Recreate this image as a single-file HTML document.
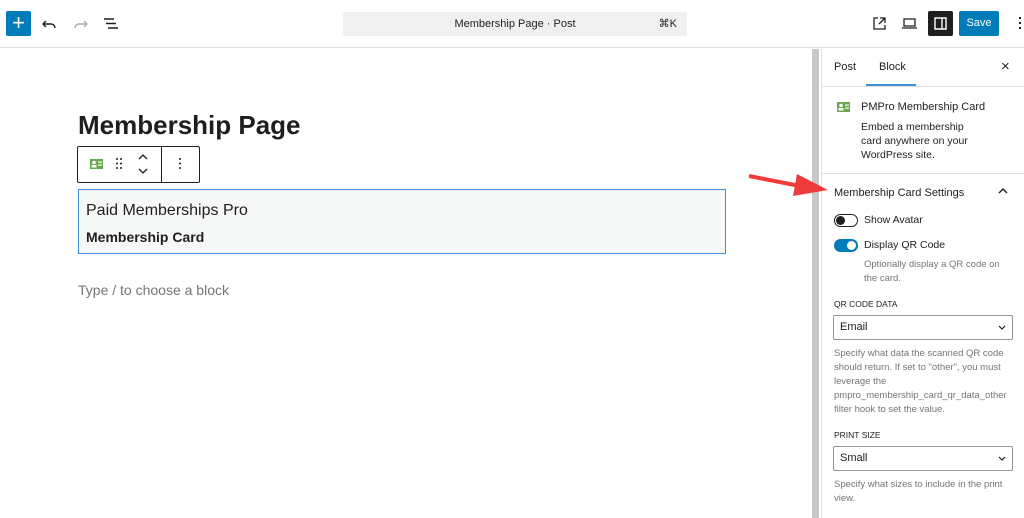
<!DOCTYPE html>
<html><head><meta charset="utf-8">
<style>
*{box-sizing:border-box;margin:0;padding:0}
body{width:1024px;height:518px;overflow:hidden;background:#fff;font-family:"Liberation Sans",sans-serif;color:#1e1e1e;position:relative}
.abs{position:absolute}
.top{left:0;top:0;width:1024px;height:48px;border-bottom:1px solid #e0e0e0;background:#fff}
.plus{left:6px;top:11px;width:25px;height:25px;background:#007cba;border-radius:2px;color:#fff;font-size:22px;line-height:24px;text-align:center}
.cmd{left:343px;top:12px;width:344px;height:24px;background:#f0f0f0;border-radius:2px;font-size:11px;line-height:24px;text-align:center;color:#1e1e1e}
.save{left:959px;top:11px;width:40px;height:25px;background:#007cba;color:#fff;border-radius:2px;font-size:11px;line-height:25px;text-align:center}
.sb{left:812px;top:49px;width:7px;height:469px;background:#c8c8c8}
.side{left:821px;top:49px;width:203px;height:469px;border-left:1px solid #e0e0e0;background:#fff;font-size:11px}
.t{font-size:11px}
.help{color:#757575;font-size:9.5px;line-height:14px}
.sel{width:180px;height:25px;border:1px solid #949494;border-radius:2px;font-size:11px;line-height:23px;padding-left:6px}
.lab{font-size:8.5px;font-weight:500;color:#1e1e1e}
</style></head><body>
<div class="abs top"></div>
<div class="abs plus">+</div>
<svg class="abs" style="left:41px;top:15px" width="18" height="18" viewBox="0 0 18 18"><path d="M5 6 L2 9 L5 12 M2 9 H10 a4 4 0 0 1 4 4" fill="none" stroke="#1e1e1e" stroke-width="1.4"/></svg>
<svg class="abs" style="left:71px;top:15px" width="18" height="18" viewBox="0 0 18 18"><path d="M13 6 L16 9 L13 12 M16 9 H8 a4 4 0 0 0 -4 4" fill="none" stroke="#aaa" stroke-width="1.4"/></svg>
<svg class="abs" style="left:102px;top:16px" width="18" height="16" viewBox="0 0 18 16"><path d="M2 3H12M4 7.5H14M6 12H16" stroke="#1e1e1e" stroke-width="1.4"/></svg>
<div class="abs cmd">Membership Page · Post<span style="position:absolute;right:10px">⌘K</span></div>
<svg class="abs" style="left:872px;top:16px" width="15" height="15" viewBox="0 0 15 15"><path d="M6 2H2V13H13V9M8 2H13V7M13 2L7 8" fill="none" stroke="#1e1e1e" stroke-width="1.3"/></svg>
<svg class="abs" style="left:901px;top:17px" width="17" height="13" viewBox="0 0 17 13"><path d="M3 2H14V9H3Z M1 11H16" fill="none" stroke="#1e1e1e" stroke-width="1.3"/></svg>
<div class="abs" style="left:928px;top:11px;width:25px;height:25px;background:#1e1e1e;border-radius:2px"></div>
<svg class="abs" style="left:933px;top:16px" width="15" height="15" viewBox="0 0 15 15"><path d="M2 2H13V13H2Z M9 2V13" fill="none" stroke="#fff" stroke-width="1.4"/></svg>
<div class="abs save">Save</div>
<div class="abs" style="left:1019px;top:17px;width:2px;height:2px;background:#1e1e1e;box-shadow:0 5px 0 #1e1e1e,0 10px 0 #1e1e1e"></div>

<div class="abs" style="left:78px;top:110px;font-size:26px;font-weight:bold">Membership Page</div>
<div class="abs" style="left:77px;top:146px;width:123px;height:37px;border:1px solid #1e1e1e;border-radius:2px"></div>
<div class="abs" style="left:161px;top:147px;width:1px;height:35px;background:#1e1e1e"></div>
<svg class="abs" style="left:90px;top:159px" width="13" height="10" viewBox="0 0 13 10"><rect width="13" height="10" fill="#6aa84f"/><circle cx="4" cy="3.5" r="1.8" fill="#fff"/><rect x="1.5" y="6" width="5" height="2.5" fill="#fff"/><rect x="8" y="2.5" width="4" height="1.2" fill="#fff"/><rect x="8" y="5.5" width="4" height="1.2" fill="#fff"/></svg>
<svg class="abs" style="left:115px;top:157px" width="8" height="13" viewBox="0 0 8 13"><g fill="#1e1e1e"><circle cx="2" cy="2" r="1"/><circle cx="6" cy="2" r="1"/><circle cx="2" cy="6.5" r="1"/><circle cx="6" cy="6.5" r="1"/><circle cx="2" cy="11" r="1"/><circle cx="6" cy="11" r="1"/></g></svg>
<svg class="abs" style="left:137px;top:153px" width="12" height="22" viewBox="0 0 12 22"><path d="M2 6L6 2L10 6M2 16L6 20L10 16" fill="none" stroke="#1e1e1e" stroke-width="1.3"/></svg>
<svg class="abs" style="left:178px;top:157px" width="4" height="13" viewBox="0 0 4 13"><g fill="#1e1e1e"><circle cx="2" cy="2" r="1"/><circle cx="2" cy="6.5" r="1"/><circle cx="2" cy="11" r="1"/></g></svg>
<div class="abs" style="left:78px;top:189px;width:648px;height:65px;border:1.5px solid #3d8fd6;background:#f6f7f7"></div>
<div class="abs" style="left:86px;top:202px;font-size:16px">Paid Memberships Pro</div>
<div class="abs" style="left:86px;top:229px;font-size:14px;font-weight:bold">Membership Card</div>
<div class="abs" style="left:78px;top:282px;font-size:14px;color:#757575">Type / to choose a block</div>

<div class="abs sb"></div>
<div class="abs side"></div>
<div class="abs t" style="left:834px;top:61px">Post</div>
<div class="abs t" style="left:879px;top:61px">Block</div>
<div class="abs" style="left:866px;top:84px;width:50px;height:2px;background:#3d8fd6"></div>
<div class="abs" style="left:1001px;top:58px;font-size:15px">×</div>
<div class="abs" style="left:822px;top:86px;width:202px;height:1px;background:#e0e0e0"></div>
<svg class="abs" style="left:837px;top:102px" width="13" height="10" viewBox="0 0 13 10"><rect width="13" height="10" fill="#6aa84f"/><circle cx="4" cy="3.5" r="1.8" fill="#fff"/><rect x="1.5" y="6" width="5" height="2.5" fill="#fff"/><rect x="8" y="2.5" width="4" height="1.2" fill="#fff"/><rect x="8" y="5.5" width="4" height="1.2" fill="#fff"/></svg>
<div class="abs t" style="left:861px;top:101px">PMPro Membership Card</div>
<div class="abs" style="left:861px;top:120px;font-size:10.5px;line-height:14px;width:112px">Embed a membership card anywhere on your WordPress site.</div>
<div class="abs" style="left:822px;top:173px;width:202px;height:1px;background:#e0e0e0"></div>
<div class="abs t" style="left:834px;top:187px">Membership Card Settings</div>
<svg class="abs" style="left:998px;top:187px" width="10" height="8" viewBox="0 0 10 8"><path d="M1 6L5 2L9 6" fill="none" stroke="#1e1e1e" stroke-width="1.4"/></svg>
<div class="abs" style="left:834px;top:214px;width:24px;height:13px;border:1px solid #1e1e1e;border-radius:7px"></div>
<div class="abs" style="left:836px;top:216px;width:9px;height:9px;background:#1e1e1e;border-radius:50%"></div>
<div class="abs t" style="left:864px;top:214px;font-size:10.5px">Show Avatar</div>
<div class="abs" style="left:834px;top:239px;width:24px;height:13px;background:#007cba;border-radius:7px"></div>
<div class="abs" style="left:847px;top:241px;width:9px;height:9px;background:#fff;border-radius:50%"></div>
<div class="abs t" style="left:864px;top:239px;font-size:10.5px">Display QR Code</div>
<div class="abs help" style="left:864px;top:258px;width:150px">Optionally display a QR code on the card.</div>
<div class="abs lab" style="left:834px;top:299px">QR CODE DATA</div>
<div class="abs sel" style="left:833px;top:315px">Email</div>
<svg class="abs" style="left:998px;top:325px" width="8" height="6" viewBox="0 0 8 6"><path d="M1 1L4 4L7 1" fill="none" stroke="#1e1e1e" stroke-width="1.2"/></svg>
<div class="abs help" style="left:834px;top:347px;width:185px">Specify what data the scanned QR code should return. If set to "other", you must leverage the pmpro_membership_card_qr_data_other filter hook to set the value.</div>
<div class="abs lab" style="left:834px;top:430px">PRINT SIZE</div>
<div class="abs sel" style="left:833px;top:446px">Small</div>
<svg class="abs" style="left:998px;top:456px" width="8" height="6" viewBox="0 0 8 6"><path d="M1 1L4 4L7 1" fill="none" stroke="#1e1e1e" stroke-width="1.2"/></svg>
<div class="abs help" style="left:834px;top:478px;width:185px">Specify what sizes to include in the print view.</div>

<svg class="abs" style="left:745px;top:168px" width="85" height="30" viewBox="0 0 85 30"><path d="M4 8 L55 18" stroke="#ef3b3b" stroke-width="4"/><path d="M52 6 L83 22 L48 28 Z" fill="#ef3b3b"/></svg>
</body></html>
